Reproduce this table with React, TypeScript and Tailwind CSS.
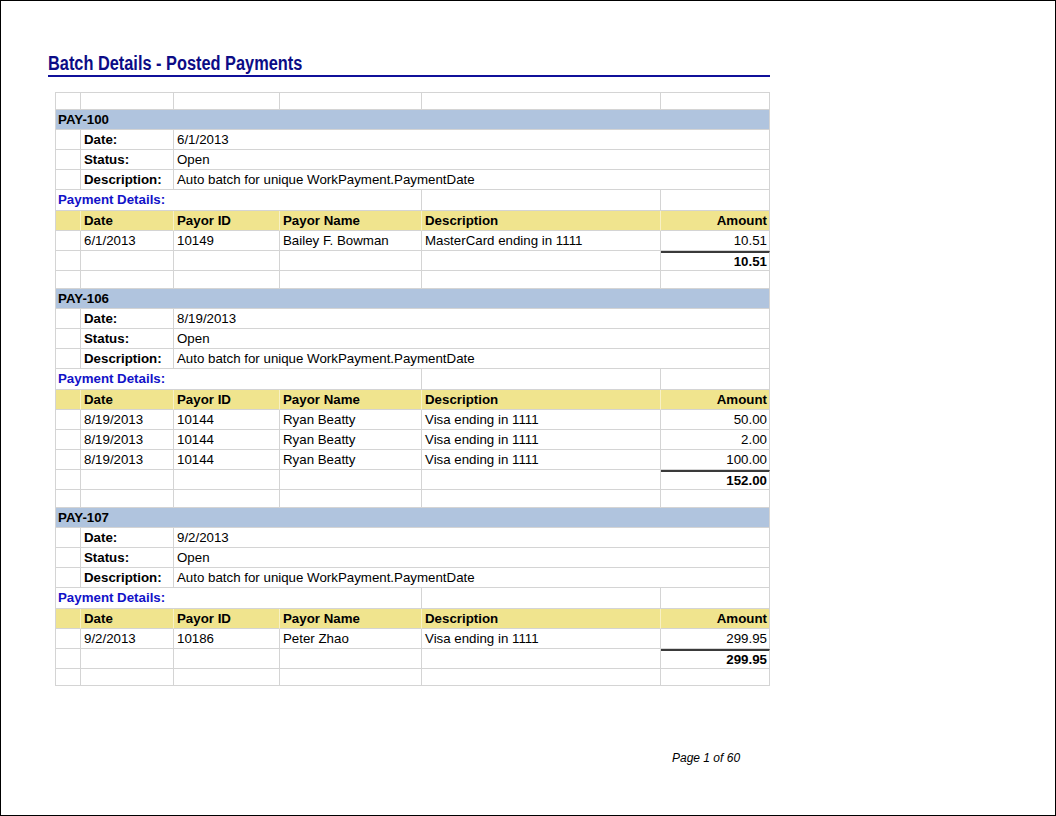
import React from "react";

type Payment = { date: string; id: string; name: string; desc: string; amount: string };
type Batch = { code: string; date: string; status: string; description: string; payments: Payment[]; total: string };

const batches: Batch[] = [
  {
    code: "PAY-100",
    date: "6/1/2013",
    status: "Open",
    description: "Auto batch for unique WorkPayment.PaymentDate",
    payments: [{ date: "6/1/2013", id: "10149", name: "Bailey F. Bowman", desc: "MasterCard ending in 1111", amount: "10.51" }],
    total: "10.51",
  },
  {
    code: "PAY-106",
    date: "8/19/2013",
    status: "Open",
    description: "Auto batch for unique WorkPayment.PaymentDate",
    payments: [
      { date: "8/19/2013", id: "10144", name: "Ryan Beatty", desc: "Visa ending in 1111", amount: "50.00" },
      { date: "8/19/2013", id: "10144", name: "Ryan Beatty", desc: "Visa ending in 1111", amount: "2.00" },
      { date: "8/19/2013", id: "10144", name: "Ryan Beatty", desc: "Visa ending in 1111", amount: "100.00" },
    ],
    total: "152.00",
  },
  {
    code: "PAY-107",
    date: "9/2/2013",
    status: "Open",
    description: "Auto batch for unique WorkPayment.PaymentDate",
    payments: [{ date: "9/2/2013", id: "10186", name: "Peter Zhao", desc: "Visa ending in 1111", amount: "299.95" }],
    total: "299.95",
  },
];

const row = "grid grid-cols-[25px_93px_106px_142px_239px_109px] h-[20px]";
const cell = "border-r border-b border-[#d4d4d4] flex items-center overflow-hidden whitespace-nowrap";

function EmptyRow({ h }: { h: string }) {
  return (
    <div className={`grid grid-cols-[25px_93px_106px_142px_239px_109px] ${h}`}>
      {[0, 1, 2, 3, 4, 5].map((i) => (
        <div key={i} className={cell} />
      ))}
    </div>
  );
}

function BatchBlock({ b }: { b: Batch }) {
  return (
    <>
      <div className={row}>
        <div className={`${cell} col-span-6 bg-[#b0c4de] font-bold pl-[2px]`}>{b.code}</div>
      </div>
      {[
        ["Date:", b.date],
        ["Status:", b.status],
        ["Description:", b.description],
      ].map(([label, value]) => (
        <div key={label} className={row}>
          <div className={cell} />
          <div className={`${cell} font-bold pl-[3px]`}>{label}</div>
          <div className={`${cell} col-span-4 pl-[3px]`}>{value}</div>
        </div>
      ))}
      <div className="grid grid-cols-[25px_93px_106px_142px_239px_109px] h-[21px]">
        <div className={`${cell} col-span-4 pl-[2px] font-bold text-[#1212c8]`}>Payment Details:</div>
        <div className={cell} />
        <div className={cell} />
      </div>
      <div className={`${row} bg-[#f0e48e] font-bold`}>
        <div className={`${cell} border-r-[#f8f1c6]`} />
        <div className={`${cell} border-r-[#f8f1c6] pl-[3px]`}>Date</div>
        <div className={`${cell} border-r-[#f8f1c6] pl-[3px]`}>Payor ID</div>
        <div className={`${cell} border-r-[#f8f1c6] pl-[3px]`}>Payor Name</div>
        <div className={`${cell} border-r-[#f8f1c6] pl-[3px]`}>Description</div>
        <div className={`${cell} justify-end pr-[2px]`}>Amount</div>
      </div>
      {b.payments.map((p, i) => (
        <div key={i} className={row}>
          <div className={cell} />
          <div className={`${cell} pl-[3px]`}>{p.date}</div>
          <div className={`${cell} pl-[3px]`}>{p.id}</div>
          <div className={`${cell} pl-[3px]`}>{p.name}</div>
          <div className={`${cell} pl-[3px]`}>{p.desc}</div>
          <div className={`${cell} justify-end pr-[2px]`}>{p.amount}</div>
        </div>
      ))}
      <div className={row}>
        <div className={cell} />
        <div className={cell} />
        <div className={cell} />
        <div className={cell} />
        <div className={cell} />
        <div className={`${cell} justify-end pr-[2px] font-bold border-t-2 border-t-[#3a3a3a]`}>{b.total}</div>
      </div>
    </>
  );
}

export default function App() {
  return (
    <div className="w-[1056px] h-[816px] bg-white border border-black font-['Liberation_Sans',Arial,sans-serif] text-[13.3px] text-black relative">
      <div className="pl-[47px] pt-[50px]">
        {/* Report title */}
        <div className="w-[722px] border-b-2 border-[#10109a] h-[26px]">
          <h1 className="font-bold text-[20px] leading-[24px] text-[#0c0c86] origin-left scale-x-[0.817] whitespace-nowrap">
            Batch Details - Posted Payments
          </h1>
        </div>

        {/* Batch table */}
        <div className="mt-[15px] ml-[7px] w-[715px] border-l border-t border-[#d4d4d4]">
          <EmptyRow h="h-[17px]" />
          {batches.map((b, i) => (
            <React.Fragment key={b.code}>
              <BatchBlock b={b} />
              {i < batches.length - 1 && <EmptyRow h="h-[18px]" />}
            </React.Fragment>
          ))}
          <EmptyRow h="h-[17px]" />
        </div>
      </div>

      <div className="absolute left-[671px] top-[748px] italic text-[12px]">Page 1 of 60</div>
    </div>
  );
}
